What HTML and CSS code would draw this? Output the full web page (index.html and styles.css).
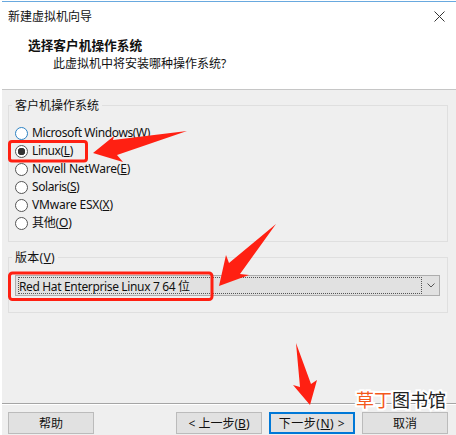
FILE: index.html
```html
<!DOCTYPE html>
<html lang="zh-CN">
<head>
  <meta charset="UTF-8">
  <title>新建虚拟机向导</title>
  <link rel="stylesheet" href="styles.css">
</head>
<body>

  <div class="dialog">
    <header class="header">
      <div class="titlebar">
        <span class="title">新建虚拟机向导</span>
        <svg class="close" width="11" height="11" viewBox="0 0 11 11"><path d="M.5.5l10 10M10.5.5l-10 10"/></svg>
      </div>
      <h1>选择客户机操作系统</h1>
      <p class="subtitle">此虚拟机中将安装哪种操作系统?</p>
    </header>

    <main class="content">
      <section class="group group-os">
        <h2>客户机操作系统</h2>
        <div class="options">
          <div class="option hot"><i class="radio"></i><span>Microsoft Windows(<u>W</u>)</span></div>
          <div class="option checked"><i class="radio"></i><span>Linux(<u>L</u>)</span></div>
          <div class="option wide"><i class="radio"></i><span>Novell NetWare(<u>E</u>)</span></div>
          <div class="option"><i class="radio"></i><span>Solaris(<u>S</u>)</span></div>
          <div class="option wide"><i class="radio"></i><span>VMware ESX(<u>X</u>)</span></div>
          <div class="option wide"><i class="radio"></i><span>其他(<u>O</u>)</span></div>
        </div>
      </section>

      <section class="group group-version">
        <h2>版本(<u>V</u>)</h2>
        <div class="select">
          <span class="value">Red Hat Enterprise Linux 7 64 位</span>
          <svg class="chevron" width="8" height="5" viewBox="0 0 8 5"><path d="M.5.5L4 4 7.500.5"/></svg>
        </div>
      </section>
    </main>

    <footer class="footer">
      <div class="btn help">帮助</div>
      <div class="btn">&lt; 上一步(<u>B</u>)</div>
      <div class="btn primary">下一步(<u>N</u>) &gt;</div>
      <div class="btn">取消</div>
    </footer>

    <!-- Annotations -->
    <svg class="marks" width="456" height="435" viewBox="0 0 456 435">
      <rect x="9.500" y="141.500" width="77" height="19.500" rx="2.500"/>
      <rect x="9.500" y="273" width="202.500" height="26.500" rx="3"/>
      <path d="M187 131L113 140 114 136 93 153 123 162 117 155z"/>
      <path d="M276 224L229 263 226 255 219 286 249 275 240 274z"/>
      <path d="M296 343L300 387 293 385 310 405 317 380 311 384z"/>
    </svg>
    <div class="watermark"><span>草丁</span>图书馆</div>
  </div>

</body>
</html>
```
FILE: styles.css
```css
* {
  margin: 0;
  padding: 0;
  box-sizing: border-box;
}
body {
  width: 456px;
  height: 435px;
  overflow: hidden;
  background: #fff;
  color: #111;
  font: 12px/18px "Noto Sans", "Noto Sans CJK SC", sans-serif;
}
.dialog {
  position: relative;
  height: 435px;
  margin-left: 2px;
  display: flex;
  flex-direction: column;
  background: #efefef;
  border-top: 1px solid #fff;
}

/* Header */
.header {
  height: 89px;
  background: #fff;
  border-top: 1px solid #69a9df;
  border-bottom: 1px solid #c6c6c6;
}
.titlebar {
  display: flex;
  justify-content: space-between;
  padding: 6px 11px 0 6px;
}
.close {
  margin-top: 3px;
  fill: none;
  stroke: #333;
}
h1 {
  margin-top: 10px;
  padding-left: 26px;
  font-size: 12.700px;
  line-height: 18px;
}
.subtitle {
  margin-top: 1px;
  padding-left: 51px;
}

/* Groups */
.content {
  padding: 15px 8px 0 6px;
}
.group {
  border: 1px solid #dfdfdf;
}
h2 {
  width: max-content;
  margin: -9px 0 0 3px;
  padding: 0 3px;
  background: #efefef;
  font-size: 12px;
  font-weight: normal;
}
.group-os {
  height: 137px;
}
.group-version {
  height: 56px;
  margin-top: 15px;
}
.group-version h2 {
  letter-spacing: .3px;
}
.options {
  padding: 9px 0 0 6px;
}
.option {
  display: flex;
  align-items: center;
  gap: 4px;
  height: 18px;
  letter-spacing: -.4px;
}
.wide {
  letter-spacing: -.2px;
}
.radio {
  width: 13px;
  height: 13px;
  border: 1px solid #555;
  border-radius: 50%;
  background: #fff;
}
.hot .radio {
  border-color: #2c82c4;
}
.checked .radio {
  background: radial-gradient(circle, #333 3.500px, #fff 4px);
}
.select {
  display: flex;
  align-items: center;
  justify-content: space-between;
  height: 21px;
  margin: 8px 7px 0 6px;
  padding: 1px 4px 1px 2px;
  background: #e1e1e1;
  border: 1px solid #adadad;
}
.value {
  width: 404px;
  height: 17px;
  line-height: 17px;
  letter-spacing: -.35px;
  border: 1px dotted #555;
}
.chevron {
  fill: none;
  stroke: #555;
}

/* Buttons */
.footer {
  display: flex;
  gap: 7px;
  margin-top: auto;
  height: 32px;
  padding: 8px 0 0 6px;
  border-top: 1px solid #a5a5a5;
  box-shadow: inset 0 1px #fff;
}
.btn {
  width: 86px;
  height: 22px;
  line-height: 21px;
  text-align: center;
  background: #e1e1e1;
  border: 1px solid #bbb;
}
.help {
  margin-right: 75px;
}
.primary {
  border-color: #0078d7;
  box-shadow: inset 0 0 0 1px #0078d7;
  letter-spacing: .5px;
}

/* Annotations lie over the dialog */
.marks {
  position: absolute;
  top: -1px;
  left: -2px;
  fill: #ff2012;
}
.marks rect {
  fill: none;
  stroke: #ff2012;
  stroke-width: 3;
}
.watermark {
  position: absolute;
  top: 386px;
  left: 354px;
  font-family: "Noto Sans CJK SC", sans-serif;
  font-size: 18px;
  line-height: 24px;
  color: #222;
  -webkit-text-stroke: 4px #fff;
  paint-order: stroke fill;
}
.watermark span {
  color: #f4581c;
}
```
